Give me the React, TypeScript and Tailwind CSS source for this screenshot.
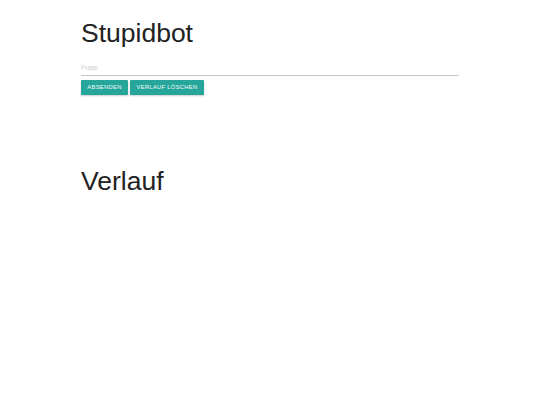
export default function App() {
  return (
    <div className="min-h-screen bg-white" style={{ fontFamily: '"Liberation Sans", Arial, sans-serif' }}>
      <div className="mx-auto w-[378px]">
        <h1 className="pt-[15px] text-[26.5px] leading-[36px] text-[#222]">Stupidbot</h1>
        <div className="mt-[8px]">
          <input
            type="text"
            placeholder="Frage"
            className="block h-[17px] w-full border-b border-[#c4c4c4] bg-transparent text-[6.5px] text-[#222] outline-none placeholder:text-[#cdcdcd]"
          />
        </div>
        <div className="mt-[4px] flex gap-[2px]">
          <button className="h-[15px] w-[47px] rounded-[1px] bg-[#26a69a] text-[5.8px] font-normal tracking-[0.3px] text-[#f2fbfa] shadow-[0_1px_2px_rgba(0,0,0,0.2)]">
            ABSENDEN
          </button>
          <button className="h-[15px] w-[74px] rounded-[1px] bg-[#26a69a] text-[5.8px] font-normal tracking-[0.3px] text-[#f2fbfa] shadow-[0_1px_2px_rgba(0,0,0,0.2)]">
            VERLAUF LÖSCHEN
          </button>
        </div>
        <h2 className="mt-[68px] text-[26.5px] leading-[36px] text-[#222]">Verlauf</h2>
      </div>
    </div>
  );
}
